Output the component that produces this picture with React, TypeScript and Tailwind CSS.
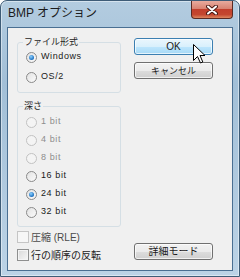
import React from 'react';

const FONT = "font-['Liberation_Sans','Noto_Sans_CJK_JP',sans-serif]";

type RadioProps = { label: string; checked?: boolean; disabled?: boolean };

function Radio({ label, checked, disabled }: RadioProps) {
  return (
    <div className="flex items-center h-[18px] pl-[8px]">
      <span
        className={
          disabled
            ? 'w-[11px] h-[11px] rounded-full border border-[#c2c2c2] bg-[#f4f4f4] flex items-center justify-center'
            : 'w-[11px] h-[11px] rounded-full border border-[#8a8a8a] bg-[linear-gradient(135deg,#e2e2e2,#fbfbfb)] flex items-center justify-center'
        }
      >
        {checked && (
          <span className="w-[5px] h-[5px] rounded-full bg-[radial-gradient(circle_at_40%_35%,#8fd2ff,#1a6fc0_70%,#0d4d8c)]" />
        )}
      </span>
      <span
        className={
          disabled
            ? 'ml-[4px] text-[9px] tracking-[0.6px] text-[#8d8d8d]'
            : 'ml-[4px] text-[9px] tracking-[0.6px] text-[#1a1a1a]'
        }
      >
        {label}
      </span>
    </div>
  );
}

function Check({ label, disabled }: { label: string; disabled?: boolean }) {
  return (
    <div className="flex items-center h-[18px]">
      <span
        className={
          disabled
            ? 'w-[12px] h-[12px] border border-[#c5c5c5] bg-[#f6f6f6]'
            : 'w-[12px] h-[12px] border border-[#8e8f8f] bg-[linear-gradient(135deg,#d8d8d8,#f7f7f7)] shadow-[inset_0_0_0_1px_#f4f4f4]'
        }
      />
      <span
        className={
          disabled
            ? 'ml-[2px] text-[10px] text-[#4a4a4a]'
            : 'ml-[2px] text-[10px] text-[#1a1a1a]'
        }
      >
        {label}
      </span>
    </div>
  );
}

export default function App() {
  return (
    <div className={`${FONT} relative w-[240px] h-[277px] flex flex-col rounded-t-[7px] border border-[#3e5c77] bg-[linear-gradient(to_bottom,#b3cce0,#a2bfd7_30%,#bcd3e6)] shadow-[inset_0_0_0_1px_rgba(255,255,255,0.45)]`}>
      {/* title bar */}
      <div className="h-[26px] flex items-start">
        <span className="pl-[7px] pt-[5px] text-[12px] leading-[14px] text-[#1b1b1b]">
          BMP オプション
        </span>
        <div className="ml-auto mr-[6px] w-[42px] h-[18px] rounded-b-[4px] border border-t-0 border-[#5b2a22] bg-[linear-gradient(to_bottom,#e8ab9e_0%,#d88372_45%,#c23f2c_50%,#c4472f_80%,#de8760_100%)] flex items-center justify-center">
          <svg width="12" height="10" viewBox="0 0 12 10">
            <path d="M2 1.5 L10 8.5 M10 1.5 L2 8.5" stroke="#4a1a14" strokeWidth="4" strokeLinecap="round" />
            <path d="M2 1.5 L10 8.5 M10 1.5 L2 8.5" stroke="#ffffff" strokeWidth="2" strokeLinecap="round" />
          </svg>
        </div>
      </div>

      {/* client area */}
      <div className="mx-[6px] h-[244px] border border-[#4a6f92] bg-[#f0f0f0] flex">
        {/* left column */}
        <div className="ml-[9px] w-[104px] pt-[7px] flex flex-col">
          <fieldset className="border border-[#d5dfe5] rounded-[3px] pb-[6px]">
            <legend className="ml-[5px] px-[1px] text-[9px] leading-[14px] text-[#1e1e1e]">
              ファイル形式
            </legend>
            <div className="flex flex-col gap-[2px] -mt-[1px]">
              <Radio label="Windows" checked />
              <Radio label="OS/2" />
            </div>
          </fieldset>

          <fieldset className="mt-[6px] border border-[#d5dfe5] rounded-[3px] pb-[5px]">
            <legend className="ml-[5px] px-[1px] text-[9px] leading-[14px] text-[#1e1e1e]">
              深さ
            </legend>
            <div className="flex flex-col">
              <Radio label="1 bit" disabled />
              <Radio label="4 bit" disabled />
              <Radio label="8 bit" disabled />
              <Radio label="16 bit" />
              <Radio label="24 bit" checked />
              <Radio label="32 bit" />
            </div>
          </fieldset>

          <div className="mt-[1px] flex flex-col">
            <Check label="圧縮 (RLE)" disabled />
            <Check label="行の順序の反転" />
          </div>
        </div>

        {/* right column */}
        <div className="ml-[13px] w-[79px] pt-[10px] pb-[10px] flex flex-col">
          <button className="h-[17px] rounded-[3px] border border-[#3c7fb1] bg-[linear-gradient(to_bottom,#eaf6fd_0%,#d9f0fc_50%,#bee6fd_51%,#a7d9f5_100%)] shadow-[inset_0_0_0_1px_rgba(255,255,255,0.7)] text-[10px] leading-[14px] text-[#1a1a1a]">
            OK
          </button>
          <button className="mt-[7px] h-[17px] rounded-[3px] border border-[#707070] bg-[linear-gradient(to_bottom,#f2f2f2_0%,#ebebeb_50%,#dddddd_51%,#cfcfcf_100%)] shadow-[inset_0_0_0_1px_rgba(255,255,255,0.7)] text-[9px] leading-[14px] text-[#1a1a1a]">
            キャンセル
          </button>
          <button className="mt-auto h-[17px] rounded-[3px] border border-[#707070] bg-[linear-gradient(to_bottom,#f2f2f2_0%,#ebebeb_50%,#dddddd_51%,#cfcfcf_100%)] shadow-[inset_0_0_0_1px_rgba(255,255,255,0.7)] text-[10px] leading-[14px] text-[#1a1a1a]">
            詳細モード
          </button>
        </div>
      </div>

      {/* mouse pointer over OK */}
      <svg className="absolute left-[192px] top-[43px]" width="13" height="20" viewBox="0 0 13 20">
        <path d="M0.5 0.5 L0.5 16.5 L4.5 12.5 L7.5 19 L9.8 18 L7 11.5 L12 11.5 Z" fill="#ffffff" stroke="#000000" strokeWidth="1" strokeLinejoin="miter" />
      </svg>
    </div>
  );
}
